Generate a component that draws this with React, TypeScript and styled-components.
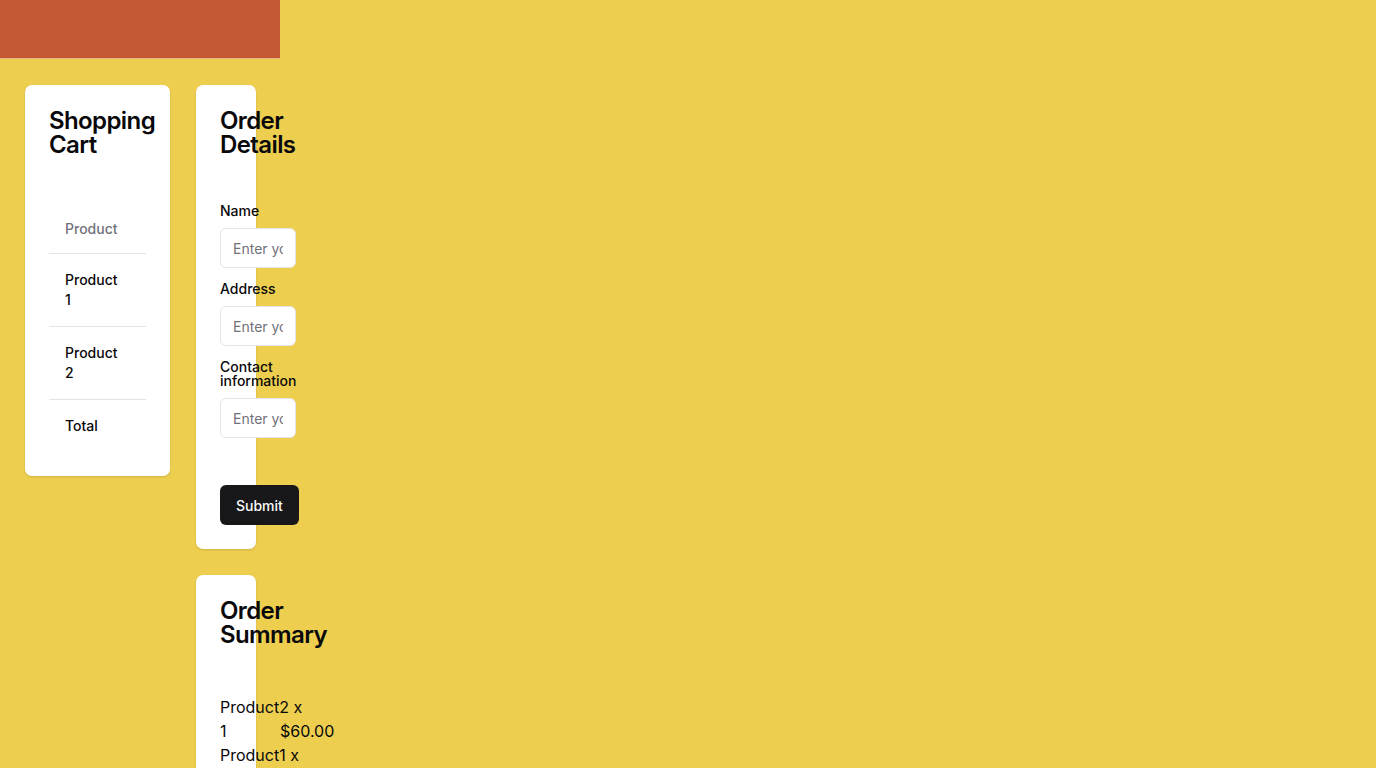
import React from "react";
import styled, { createGlobalStyle } from "styled-components";

const GlobalStyle = createGlobalStyle`
  html, body {
    margin: 0;
    padding: 0;
    background: #edce4f;
    font-family: Inter, "Noto Sans", "Liberation Sans", sans-serif;
    color: #09090b;
  }
  * { box-sizing: border-box; }
`;

const Page = styled.div`
  width: 280px;
`;

const Header = styled.header`
  height: 59px;
  background: #c45a35;
  border-bottom: 1px solid rgba(255, 240, 180, 0.6);
`;

const Main = styled.main`
  display: grid;
  grid-template-columns: 145px 60px;
  column-gap: 26px;
  row-gap: 26px;
  padding: 26px 24px 26px 25px;
  align-items: start;
`;

const Card = styled.section<{ $col: number; $row: number }>`
  grid-column: ${(p) => p.$col};
  grid-row: ${(p) => p.$row};
  background: #ffffff;
  border-radius: 7px;
  box-shadow: 0 1px 3px rgba(0, 0, 0, 0.08), 0 1px 2px rgba(0, 0, 0, 0.05);
  padding: 24px;
  min-width: 0;
`;

const Title = styled.h2<{ $gap: number }>`
  margin: 0 0 ${(p) => p.$gap}px 0;
  font-size: 24px;
  line-height: 24px;
  font-weight: 600;
  letter-spacing: -0.025em;
  color: #09090b;
`;

const Table = styled.table`
  width: 100%;
  border-collapse: collapse;
  font-size: 14px;
  line-height: 20px;
`;

const Row = styled.tr`
  border-bottom: 1px solid #e4e4e7;
  tbody > &:last-child {
    border-bottom: none;
  }
`;

const HeadCell = styled.th`
  text-align: left;
  padding: 18px 24px 14px 16px;
  font-weight: 500;
  color: #71717a;
`;

const Cell = styled.td`
  text-align: left;
  padding: 16px 24px 16px 16px;
  font-weight: 500;
  color: #09090b;
`;

const Form = styled.form`
  width: 76px;
  display: flex;
  flex-direction: column;
  gap: 14px;
`;

const Field = styled.div`
  display: flex;
  flex-direction: column;
  gap: 10px;
`;

const Label = styled.label`
  font-size: 14px;
  line-height: 14px;
  font-weight: 500;
  color: #09090b;
`;

const Input = styled.input`
  width: 76px;
  height: 40px;
  border: 1px solid #e4e4e7;
  border-radius: 6px;
  background: #ffffff;
  padding: 0 12px;
  font-family: inherit;
  font-size: 14px;
  color: #09090b;
  outline: none;
  &::placeholder {
    color: #71717a;
  }
`;

const Button = styled.button`
  align-self: flex-start;
  margin-top: 33px;
  height: 40px;
  padding: 0 16px;
  border: none;
  border-radius: 6px;
  background: #18181b;
  color: #fafafa;
  font-family: inherit;
  font-size: 14px;
  font-weight: 500;
  white-space: nowrap;
  cursor: pointer;
`;

const SummaryList = styled.div`
  font-size: 16px;
  line-height: 24px;
  color: #09090b;
  white-space: nowrap;
`;

const SummaryItem = styled.div``;

const ItemLine = styled.div`
  display: flex;
`;

const Qty = styled.span`
  flex: 0 0 60px;
`;

const Price = styled.span``;

const items = [
  { name: "Product2", qty: 1, price: "$60.00" },
  { name: "Product1", qty: 1, price: "$40.00" },
];

export default function App() {
  return (
    <>
      <GlobalStyle />
      <Page>
        <Header />
        <Main>
          <Card $col={1} $row={1}>
            <Title $gap={44}>Shopping Cart</Title>
            <Table>
              <thead>
                <Row>
                  <HeadCell>Product</HeadCell>
                </Row>
              </thead>
              <tbody>
                <Row>
                  <Cell>Product 1</Cell>
                </Row>
                <Row>
                  <Cell>Product 2</Cell>
                </Row>
                <Row>
                  <Cell>Total</Cell>
                </Row>
              </tbody>
            </Table>
          </Card>

          <Card $col={2} $row={1}>
            <Title $gap={47}>Order Details</Title>
            <Form onSubmit={(e) => e.preventDefault()}>
              <Field>
                <Label htmlFor="name">Name</Label>
                <Input id="name" placeholder="Enter your name" />
              </Field>
              <Field>
                <Label htmlFor="address">Address</Label>
                <Input id="address" placeholder="Enter your address" />
              </Field>
              <Field>
                <Label htmlFor="contact">Contact information</Label>
                <Input id="contact" placeholder="Enter your contact information" />
              </Field>
              <Button type="submit">Submit</Button>
            </Form>
          </Card>

          <Card $col={2} $row={2}>
            <Title $gap={48}>Order Summary</Title>
            <SummaryList>
              {items.map((it) => (
                <SummaryItem key={it.name}>
                  <div>{it.name} x</div>
                  <ItemLine>
                    <Qty>{it.qty}</Qty>
                    <Price>{it.price}</Price>
                  </ItemLine>
                </SummaryItem>
              ))}
            </SummaryList>
          </Card>
        </Main>
      </Page>
    </>
  );
}
